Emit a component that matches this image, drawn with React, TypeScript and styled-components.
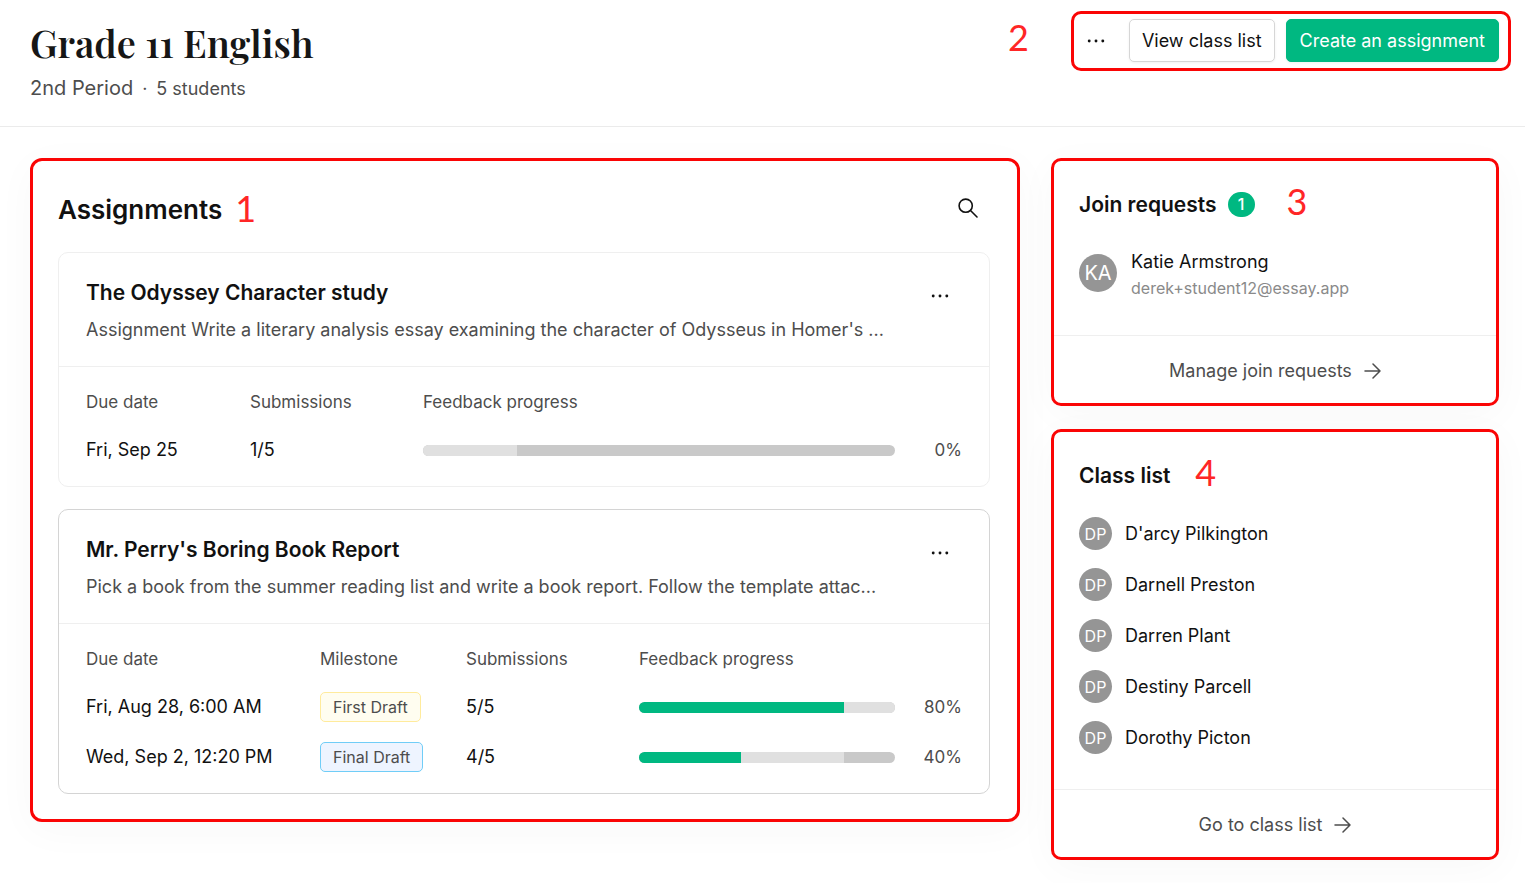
import React from "react";
import styled, { createGlobalStyle } from "styled-components";

const GlobalStyle = createGlobalStyle`
  *, *::before, *::after { box-sizing: border-box; }
  body {
    margin: 0;
    background: #fff;
    color: #111;
    font-family: Inter, "Liberation Sans", sans-serif;
    font-size: 18px;
    line-height: 24px;
  }
  h1, h2, h3, p, ul { margin: 0; padding: 0; }
  button { font: inherit; color: inherit; cursor: pointer; }
`;

const red = "#fa0505";
const green = "#00b881";

const Header = styled.header`
  display: flex;
  justify-content: space-between;
  align-items: flex-start;
  padding: 11px 14px 23px 30px;
  border-bottom: 1px solid #ebebeb;
`;

const Heading = styled.div`
  padding-top: 8px;
`;

const PageTitle = styled.h1`
  font-family: "Playfair Display", "Liberation Serif", serif;
  font-size: 38px;
  line-height: 48px;
  font-weight: 600;
  color: #161616;
`;

const Subtitle = styled.p`
  display: flex;
  align-items: baseline;
  gap: 9px;
  padding-top: 7px;
  color: #4d4d4d;
  line-height: 28px;
`;

const Period = styled.span`
  font-size: 20px;
`;

const HeaderSide = styled.div`
  display: flex;
  align-items: flex-start;
  gap: 42px;
`;

const Marker = styled.span`
  font-family: Lato, sans-serif;
  font-size: 36px;
  line-height: 40px;
  font-weight: 400;
  color: #ff2626;
`;

const HeaderMarker = styled(Marker)`
  padding-top: 6px;
`;

const Actions = styled.div`
  display: flex;
  gap: 11px;
  padding: 5px 9px 6px 0;
  border: 3px solid ${red};
  border-radius: 10px;
`;

const Button = styled.button<{ $primary?: boolean }>`
  height: 43px;
  padding: 0 ${(p) => (p.$primary ? "13px" : "12px")};
  border: 1px solid ${(p) => (p.$primary ? green : "#d6d6d6")};
  border-radius: 5px;
  background: ${(p) => (p.$primary ? green : "#fff")};
  color: ${(p) => (p.$primary ? "#fff" : "#111")};
  box-shadow: 0 1px 3px rgba(0, 0, 0, 0.06);
`;

const IconButton = styled.button`
  display: grid;
  place-items: center;
  width: 44px;
  height: 43px;
  flex: none;
  padding: 0;
  border: 0;
  background: none;
`;

const Main = styled.main`
  display: grid;
  grid-template-columns: minmax(0, 1fr) 448px;
  align-items: start;
  gap: 31px;
  padding: 31px 26px 24px 30px;
`;

const Panel = styled.section`
  border: 3px solid ${red};
  border-radius: 10px;
  background: #fff;
  box-shadow: 0 8px 40px rgba(0, 0, 0, 0.03);
`;

const AssignmentsPanel = styled(Panel)`
  display: flex;
  flex-direction: column;
  gap: 22px;
  padding: 25px 27px 25px 25px;
  border-radius: 12px;
`;

const AssignmentsHead = styled.div`
  display: flex;
  align-items: center;
  height: 44px;
`;

const AssignmentsTitle = styled.h2`
  font-size: 26px;
  line-height: 32px;
  font-weight: 600;
  margin-right: 13px;
  padding-top: 3px;
`;

const SearchButton = styled(IconButton)`
  margin-left: auto;
`;

const Card = styled.article<{ $strong?: boolean }>`
  border: 1px solid ${(p) => (p.$strong ? "#d4d4d4" : "#efefef")};
  border-radius: 10px;
`;

const CardHead = styled.div`
  display: flex;
  justify-content: space-between;
  padding: 25px 27px 24px;
  border-bottom: 1px solid #efefef;
`;

const CardText = styled.div`
  min-width: 0;
`;

const CardTitle = styled.h3`
  font-size: 21px;
  line-height: 30px;
  font-weight: 600;
`;

const CardDescription = styled.p`
  padding-top: 10px;
  color: #4d4d4d;
  white-space: nowrap;
  overflow: hidden;
  text-overflow: ellipsis;
`;

const CardMenu = styled(IconButton)`
  height: 36px;
`;

const TableArea = styled.div`
  padding: 11px 27px;
`;

const Table = styled.table`
  width: 100%;
  table-layout: fixed;
  border-collapse: collapse;
  text-align: left;
  th, td { padding: 0; }
  th {
    height: 47px;
    font-size: 17px;
    font-weight: 400;
    color: #4d4d4d;
  }
  td { height: 50px; }
`;

const Column = styled.col<{ $width?: number }>`
  width: ${(p) => (p.$width ? `${p.$width}px` : "auto")};
`;

const Tag = styled.span<{ $tone: "first" | "final" }>`
  display: inline-block;
  padding: 2px 12px;
  border: 1px solid ${(p) => (p.$tone === "first" ? "#ffeb9c" : "#70cdf7")};
  border-radius: 5px;
  background: ${(p) => (p.$tone === "first" ? "#fffdf0" : "#eef4ff")};
  font-size: 16px;
  color: #4d4d4d;
`;

const Progress = styled.div`
  display: flex;
  align-items: center;
`;

const Track = styled.div`
  display: flex;
  flex: 1;
  height: 11px;
  border-radius: 6px;
  overflow: hidden;
  background: #c9c9c9;
`;

const Segment = styled.div<{ $done?: boolean }>`
  background: ${(p) => (p.$done ? green : "#e0e0e0")};
`;

const Percent = styled.span`
  width: 67px;
  text-align: right;
  font-size: 17px;
  color: #4d4d4d;
`;

const Side = styled.div`
  display: flex;
  flex-direction: column;
  gap: 23px;
`;

const SideBody = styled.div<{ $spacious?: boolean }>`
  padding: 23px 25px ${(p) => (p.$spacious ? "35px" : "26px")};
`;

const SideHead = styled.div`
  display: flex;
  align-items: center;
  height: 40px;
`;

const SideTitle = styled.h2`
  font-size: 21px;
  line-height: 28px;
  font-weight: 600;
  padding-top: 2px;
`;

const Badge = styled.span`
  display: grid;
  place-items: center;
  width: 27px;
  height: 25px;
  margin-left: 11px;
  border-radius: 13px;
  background: ${green};
  color: #fff;
  font-size: 16px;
  font-weight: 500;
`;

const SideMarker = styled(Marker)<{ $gap: number }>`
  margin-left: ${(p) => p.$gap}px;
  padding-bottom: 6px;
`;

const Avatar = styled.span<{ $large?: boolean }>`
  display: grid;
  place-items: center;
  flex: none;
  width: ${(p) => (p.$large ? 38 : 33)}px;
  height: ${(p) => (p.$large ? 38 : 33)}px;
  border-radius: 50%;
  background: #959595;
  color: #fff;
  font-size: ${(p) => (p.$large ? 20 : 16)}px;
`;

const Request = styled.div`
  display: flex;
  align-items: center;
  gap: 14px;
  padding-top: 21px;
`;

const RequestText = styled.div`
  padding-top: 5px;
`;

const Email = styled.p`
  padding-top: 2px;
  font-size: 16px;
  color: #8a8a8a;
`;

const Students = styled.ul`
  list-style: none;
  padding-top: 13px;
`;

const Student = styled.li`
  display: flex;
  align-items: center;
  gap: 13px;
  height: 51px;
`;

const FooterLink = styled.a`
  display: flex;
  align-items: center;
  justify-content: center;
  gap: 12px;
  height: 68px;
  padding-top: 2px;
  border-top: 1px solid #efefef;
  color: #4d4d4d;
  text-decoration: none;
`;

const Dots = () => (
  <svg width="18" height="4" viewBox="0 0 18 4" fill="currentColor" aria-hidden="true">
    <circle cx="2.2" cy="2" r="1.45" />
    <circle cx="9" cy="2" r="1.45" />
    <circle cx="15.8" cy="2" r="1.45" />
  </svg>
);

const SearchIcon = () => (
  <svg width="20" height="20" viewBox="0 0 20 20" fill="none" stroke="currentColor" strokeWidth="1.6" strokeLinecap="round" aria-hidden="true">
    <circle cx="7.7" cy="7.7" r="6.6" />
    <path d="M12.5 12.5 19 19" />
  </svg>
);

const ArrowIcon = () => (
  <svg width="17" height="16" viewBox="0 0 17 16" fill="none" stroke="currentColor" strokeWidth="1.5" strokeLinecap="round" strokeLinejoin="round" aria-hidden="true">
    <path d="M1 8h15M9 1l7 7-7 7" />
  </svg>
);

type Row = {
  due: string;
  milestone?: { label: string; tone: "first" | "final" };
  submissions: string;
  done: number;
  pending: number;
};

type Assignment = {
  title: string;
  description: string;
  strong?: boolean;
  dueWidth: number;
  rows: Row[];
};

const assignments: Assignment[] = [
  {
    title: "The Odyssey Character study",
    description: "Assignment Write a literary analysis essay examining the character of Odysseus in Homer's ...",
    dueWidth: 164,
    rows: [{ due: "Fri, Sep 25", submissions: "1/5", done: 0, pending: 20 }],
  },
  {
    title: "Mr. Perry's Boring Book Report",
    description: "Pick a book from the summer reading list and write a book report. Follow the template attac...",
    strong: true,
    dueWidth: 234,
    rows: [
      { due: "Fri, Aug 28, 6:00 AM", milestone: { label: "First Draft", tone: "first" }, submissions: "5/5", done: 80, pending: 20 },
      { due: "Wed, Sep 2, 12:20 PM", milestone: { label: "Final Draft", tone: "final" }, submissions: "4/5", done: 40, pending: 40 },
    ],
  },
];

const students = ["D'arcy Pilkington", "Darnell Preston", "Darren Plant", "Destiny Parcell", "Dorothy Picton"];

function AssignmentCard({ title, description, strong, dueWidth, rows }: Assignment) {
  const hasMilestones = rows.some((row) => row.milestone);
  return (
    <Card $strong={strong}>
      <CardHead>
        <CardText>
          <CardTitle>{title}</CardTitle>
          <CardDescription>{description}</CardDescription>
        </CardText>
        <CardMenu type="button" aria-label={`Options for ${title}`}>
          <Dots />
        </CardMenu>
      </CardHead>
      <TableArea>
        <Table>
          <colgroup>
            <Column $width={dueWidth} />
            {hasMilestones && <Column $width={146} />}
            <Column $width={173} />
            <Column />
          </colgroup>
          <thead>
            <tr>
              <th scope="col">Due date</th>
              {hasMilestones && <th scope="col">Milestone</th>}
              <th scope="col">Submissions</th>
              <th scope="col">Feedback progress</th>
            </tr>
          </thead>
          <tbody>
            {rows.map((row) => (
              <tr key={row.due}>
                <td>{row.due}</td>
                {row.milestone && (
                  <td>
                    <Tag $tone={row.milestone.tone}>{row.milestone.label}</Tag>
                  </td>
                )}
                <td>{row.submissions}</td>
                <td>
                  <Progress>
                    <Track>
                      <Segment $done style={{ width: `${row.done}%` }} />
                      <Segment style={{ width: `${row.pending}%` }} />
                    </Track>
                    <Percent>{row.done}%</Percent>
                  </Progress>
                </td>
              </tr>
            ))}
          </tbody>
        </Table>
      </TableArea>
    </Card>
  );
}

export default function App() {
  return (
    <>
      <GlobalStyle />
      <Header>
        <Heading>
          <PageTitle>Grade 11 English</PageTitle>
          <Subtitle>
            <Period>2nd Period</Period>
            <span>·</span>
            <span>5 students</span>
          </Subtitle>
        </Heading>
        <HeaderSide>
          <HeaderMarker>2</HeaderMarker>
          <Actions>
            <IconButton type="button" aria-label="Class options">
              <Dots />
            </IconButton>
            <Button type="button">View class list</Button>
            <Button type="button" $primary>Create an assignment</Button>
          </Actions>
        </HeaderSide>
      </Header>
      <Main>
        <AssignmentsPanel>
          <AssignmentsHead>
            <AssignmentsTitle>Assignments</AssignmentsTitle>
            <Marker>1</Marker>
            <SearchButton type="button" aria-label="Search assignments">
              <SearchIcon />
            </SearchButton>
          </AssignmentsHead>
          {assignments.map((assignment) => (
            <AssignmentCard key={assignment.title} {...assignment} />
          ))}
        </AssignmentsPanel>
        <Side>
          <Panel>
            <SideBody $spacious>
              <SideHead>
                <SideTitle>Join requests</SideTitle>
                <Badge>1</Badge>
                <SideMarker $gap={32}>3</SideMarker>
              </SideHead>
              <Request>
                <Avatar $large>KA</Avatar>
                <RequestText>
                  <p>Katie Armstrong</p>
                  <Email>derek+student12@essay.app</Email>
                </RequestText>
              </Request>
            </SideBody>
            <FooterLink href="#join-requests">
              Manage join requests
              <ArrowIcon />
            </FooterLink>
          </Panel>
          <Panel>
            <SideBody>
              <SideHead>
                <SideTitle>Class list</SideTitle>
                <SideMarker $gap={25}>4</SideMarker>
              </SideHead>
              <Students>
                {students.map((name) => (
                  <Student key={name}>
                    <Avatar>DP</Avatar>
                    {name}
                  </Student>
                ))}
              </Students>
            </SideBody>
            <FooterLink href="#class-list">
              Go to class list
              <ArrowIcon />
            </FooterLink>
          </Panel>
        </Side>
      </Main>
    </>
  );
}
